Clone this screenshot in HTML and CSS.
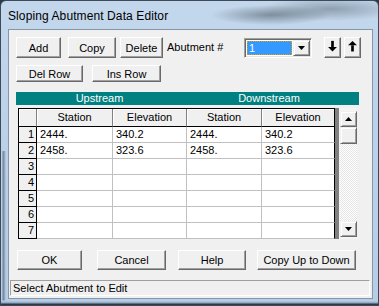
FILE: index.html
```html
<!DOCTYPE html>
<html lang="en">
<head>
    <meta charset="UTF-8">
    <title>Sloping Abutment Data Editor</title>
    <link rel="stylesheet" href="styles.css">
</head>
<body>
    <div class="window">
        <div class="titlebar">
            <span class="title">Sloping Abutment Data Editor</span>
        </div>

        <div class="client">
            <div class="toolbar">
                <button class="btn btn-add">Add</button>
                <button class="btn btn-copy">Copy</button>
                <button class="btn btn-delete">Delete</button>
                <span class="label">Abutment #</span>
                <div class="combo">
                    <div class="combo-value"><span class="focus">1</span></div>
                    <div class="combo-btn">
                        <svg width="7" height="4" viewBox="0 0 7 4"><polygon points="0,0 7,0 3.5,4" fill="#000"/></svg>
                    </div>
                </div>
                <button class="btn btn-arrow btn-down">
                    <svg width="17" height="21" viewBox="0 0 17 21"><rect x="7" y="3" width="3" height="7" fill="#000"/><polygon points="3.5,10 13.5,10 8.5,15" fill="#000"/></svg>
                </button>
                <button class="btn btn-arrow btn-up">
                    <svg width="17" height="21" viewBox="0 0 17 21"><polygon points="8.5,3 3.5,8 13.5,8" fill="#000"/><rect x="7" y="8" width="3" height="7" fill="#000"/></svg>
                </button>
            </div>

            <div class="toolbar toolbar-rows">
                <button class="btn btn-delrow">Del Row</button>
                <button class="btn btn-insrow">Ins Row</button>
            </div>

            <div class="band">
                <span class="band-up">Upstream</span>
                <span class="band-down">Downstream</span>
            </div>

            <div class="grid-wrap">
                <div class="grid" id="grid">
                    <div class="row head">
                        <div class="cell rh"></div>
                        <div class="cell c1">Station</div>
                        <div class="cell c2">Elevation</div>
                        <div class="cell c3">Station</div>
                        <div class="cell c4">Elevation</div>
                    </div>
                </div>
                <div class="scroll-gap"></div>
                <div class="scrollbar">
                    <div class="sb-btn">
                        <svg width="7" height="4" viewBox="0 0 7 4"><polygon points="3.5,0 7,4 0,4" fill="#000"/></svg>
                    </div>
                    <div class="sb-thumb"></div>
                    <div class="sb-track"></div>
                    <div class="sb-btn">
                        <svg width="7" height="4" viewBox="0 0 7 4"><polygon points="0,0 7,0 3.5,4" fill="#000"/></svg>
                    </div>
                </div>
            </div>

            <div class="actions">
                <button class="btn btn-ok">OK</button>
                <button class="btn btn-cancel">Cancel</button>
                <button class="btn btn-help">Help</button>
                <button class="btn btn-copyup">Copy Up to Down</button>
            </div>

            <div class="status">Select Abutment to Edit</div>
        </div>
    </div>

    <script>
        const rows = [
            ['2444.', '340.2', '2444.', '340.2'],
            ['2458.', '323.6', '2458.', '323.6'],
            [], [], [], [], []
        ];
        const grid = document.getElementById('grid');

        rows.forEach((values, index) => {
            const row = document.createElement('div');
            row.classList.add('row');
            row.innerHTML = `
                <div class="cell rh">${index + 1}</div>
                <div class="cell c1">${values[0] || ''}</div>
                <div class="cell c2">${values[1] || ''}</div>
                <div class="cell c3">${values[2] || ''}</div>
                <div class="cell c4">${values[3] || ''}</div>
            `;
            grid.appendChild(row);
        });
    </script>
</body>
</html>
```

FILE: styles.css
```css
* {
    box-sizing: border-box;
}

body {
    margin: 0;
    background-color: #2b3947;
    font-family: 'Liberation Sans', Arial, sans-serif;
    font-size: 11px;
    color: #000;
}

.window {
    width: 379px;
    height: 306px;
    border: 1px solid #3d4a5a;
    border-radius: 6px 6px 0 0;
    padding: 0 5px 6px 7px;
    display: flex;
    flex-direction: column;
    background:
        linear-gradient(to top, #2e3a48 0, #2e3a48 1px, #8da3bb 2px, #b9cee6 4px, transparent 5px),
        linear-gradient(to right, transparent 0, transparent 1px, rgba(60, 75, 95, 0.6) 2px, transparent 5px) 0 150px / 8px 100% no-repeat,
        radial-gradient(ellipse 60px 10px at 270px 14px, rgba(70, 85, 95, 0.55), transparent),
        radial-gradient(ellipse 70px 12px at 330px 8px, rgba(90, 105, 115, 0.5), transparent),
        linear-gradient(to bottom, #c3d7ec 0, #bcd2ea 40%, #b6cde6 100%);
}

.titlebar {
    height: 28px;
    flex: none;
    display: flex;
    align-items: center;
    padding-top: 1px;
}

.title {
    font-size: 12px;
    letter-spacing: 0.1px;
}

.client {
    flex: 1;
    background-color: #f0f0f0;
    border: 1px solid #8596a9;
}

/* classic 3d buttons */
.btn {
    font-family: inherit;
    font-size: 11px;
    color: #000;
    background-color: #f0f0f0;
    border: 1px solid;
    border-color: #fff #696969 #696969 #fff;
    box-shadow: inset -1px -1px #a0a0a0;
    padding: 0;
    margin: 0;
    height: 21px;
    display: flex;
    align-items: center;
    justify-content: center;
    flex: none;
}

.toolbar {
    display: flex;
    align-items: flex-start;
    margin: 7px 0 0 7px;
}

.btn-add { width: 45px; }
.btn-copy { width: 48px; margin-left: 7px; }
.btn-delete { width: 43px; margin-left: 4px; }

.label {
    width: 81px;
    padding-left: 4px;
    line-height: 21px;
}

.combo {
    width: 68px;
    height: 20px;
    margin-top: 1px;
    display: flex;
    border: 1px solid;
    border-color: #a0a0a0 #fff #fff #a0a0a0;
    box-shadow: inset 1px 1px #696969, inset -1px -1px #e3e3e3;
    background-color: #fff;
    padding: 2px;
}

.combo-value {
    flex: 1;
    background-color: #3399ff;
    color: #fff;
    margin-right: 1px;
}

.focus {
    display: block;
    height: 100%;
    border: 1px dotted #e0a000;
    padding-left: 1px;
    line-height: 12px;
}

.combo-btn {
    width: 17px;
    margin: -1px -1px -1px 0;
    background-color: #f0f0f0;
    border: 1px solid;
    border-color: #f0f0f0 #696969 #696969 #f0f0f0;
    box-shadow: inset 1px 1px #fff, inset -1px -1px #a0a0a0;
    display: flex;
    align-items: center;
    justify-content: center;
}

.btn-arrow {
    width: 17px;
    height: 21px;
}

.btn-down { margin-left: 12px; }
.btn-up { margin-left: 3px; }

.toolbar-rows {
    margin-top: 7px;
}

.toolbar-rows .btn {
    height: 17px;
}

.btn-delrow { width: 67px; }
.btn-insrow { width: 69px; margin-left: 9px; }

.band {
    margin: 10px 0 0 7px;
    width: 343px;
    height: 13px;
    background-color: #008080;
    color: #fff;
    display: flex;
    line-height: 13px;
}

.band-up {
    width: 167px;
    text-align: center;
}

.band-down {
    width: 172px;
    text-align: center;
}

.grid-wrap {
    margin: 3px 0 0 9px;
    display: flex;
    height: 131px;
}

.grid {
    border-left: 1px solid #000;
    border-top: 1px solid #000;
    background-color: #fff;
    height: 131px;
}

.row {
    display: flex;
    height: 16px;
}

.cell {
    height: 16px;
    border-right: 1px solid #c0c0c0;
    border-bottom: 1px solid #c0c0c0;
    padding-left: 3px;
    line-height: 15px;
    white-space: nowrap;
}

.rh { width: 18px; }
.c1 { width: 76px; }
.c2 { width: 74px; }
.c3 { width: 75px; }
.c4 { width: 73px; border-right-color: #000; }

.row .rh {
    background-color: #f0f0f0;
    border-right-color: #000;
    border-bottom-color: #000;
    text-align: right;
    padding: 0 2px 0 0;
}

.head {
    height: 18px;
}

.head .cell {
    height: 18px;
    background-color: #f0f0f0;
    border-right-color: #808080;
    border-bottom-color: #000;
    box-shadow: inset 1px 1px #fff;
    text-align: center;
    padding: 0;
    line-height: 17px;
}

.head .c4 {
    border-right-color: #000;
}

.scroll-gap {
    width: 4px;
    background-color: #808080;
}

.scrollbar {
    width: 18px;
    display: flex;
    flex-direction: column;
    padding: 3px 0 2px 1px;
    background-color: #f4f4f4;
}

.sb-btn,
.sb-thumb {
    height: 16px;
    flex: none;
    background-color: #f0f0f0;
    border: 1px solid;
    border-color: #f0f0f0 #696969 #696969 #f0f0f0;
    box-shadow: inset 1px 1px #fff, inset -1px -1px #a0a0a0;
    display: flex;
    align-items: center;
    justify-content: center;
}

.sb-thumb {
    height: 17px;
}

.sb-track {
    flex: 1;
    background-color: #f4f4f4;
    background-image: repeating-conic-gradient(#fff 0 25%, #e4e4e4 0 50%);
    background-size: 2px 2px;
}

.actions {
    display: flex;
    margin: 11px 0 0 8px;
}

.actions .btn {
    height: 20px;
}

.btn-ok { width: 65px; }
.btn-cancel { width: 69px; margin-left: 15px; }
.btn-help { width: 68px; margin-left: 12px; }
.btn-copyup { width: 99px; margin-left: 11px; }

.status {
    margin: 10px 0 0 1px;
    width: 360px;
    height: 16px;
    border: 1px solid;
    border-color: #a0a0a0 #fff #fff #a0a0a0;
    padding-left: 2px;
    line-height: 14px;
}
```
